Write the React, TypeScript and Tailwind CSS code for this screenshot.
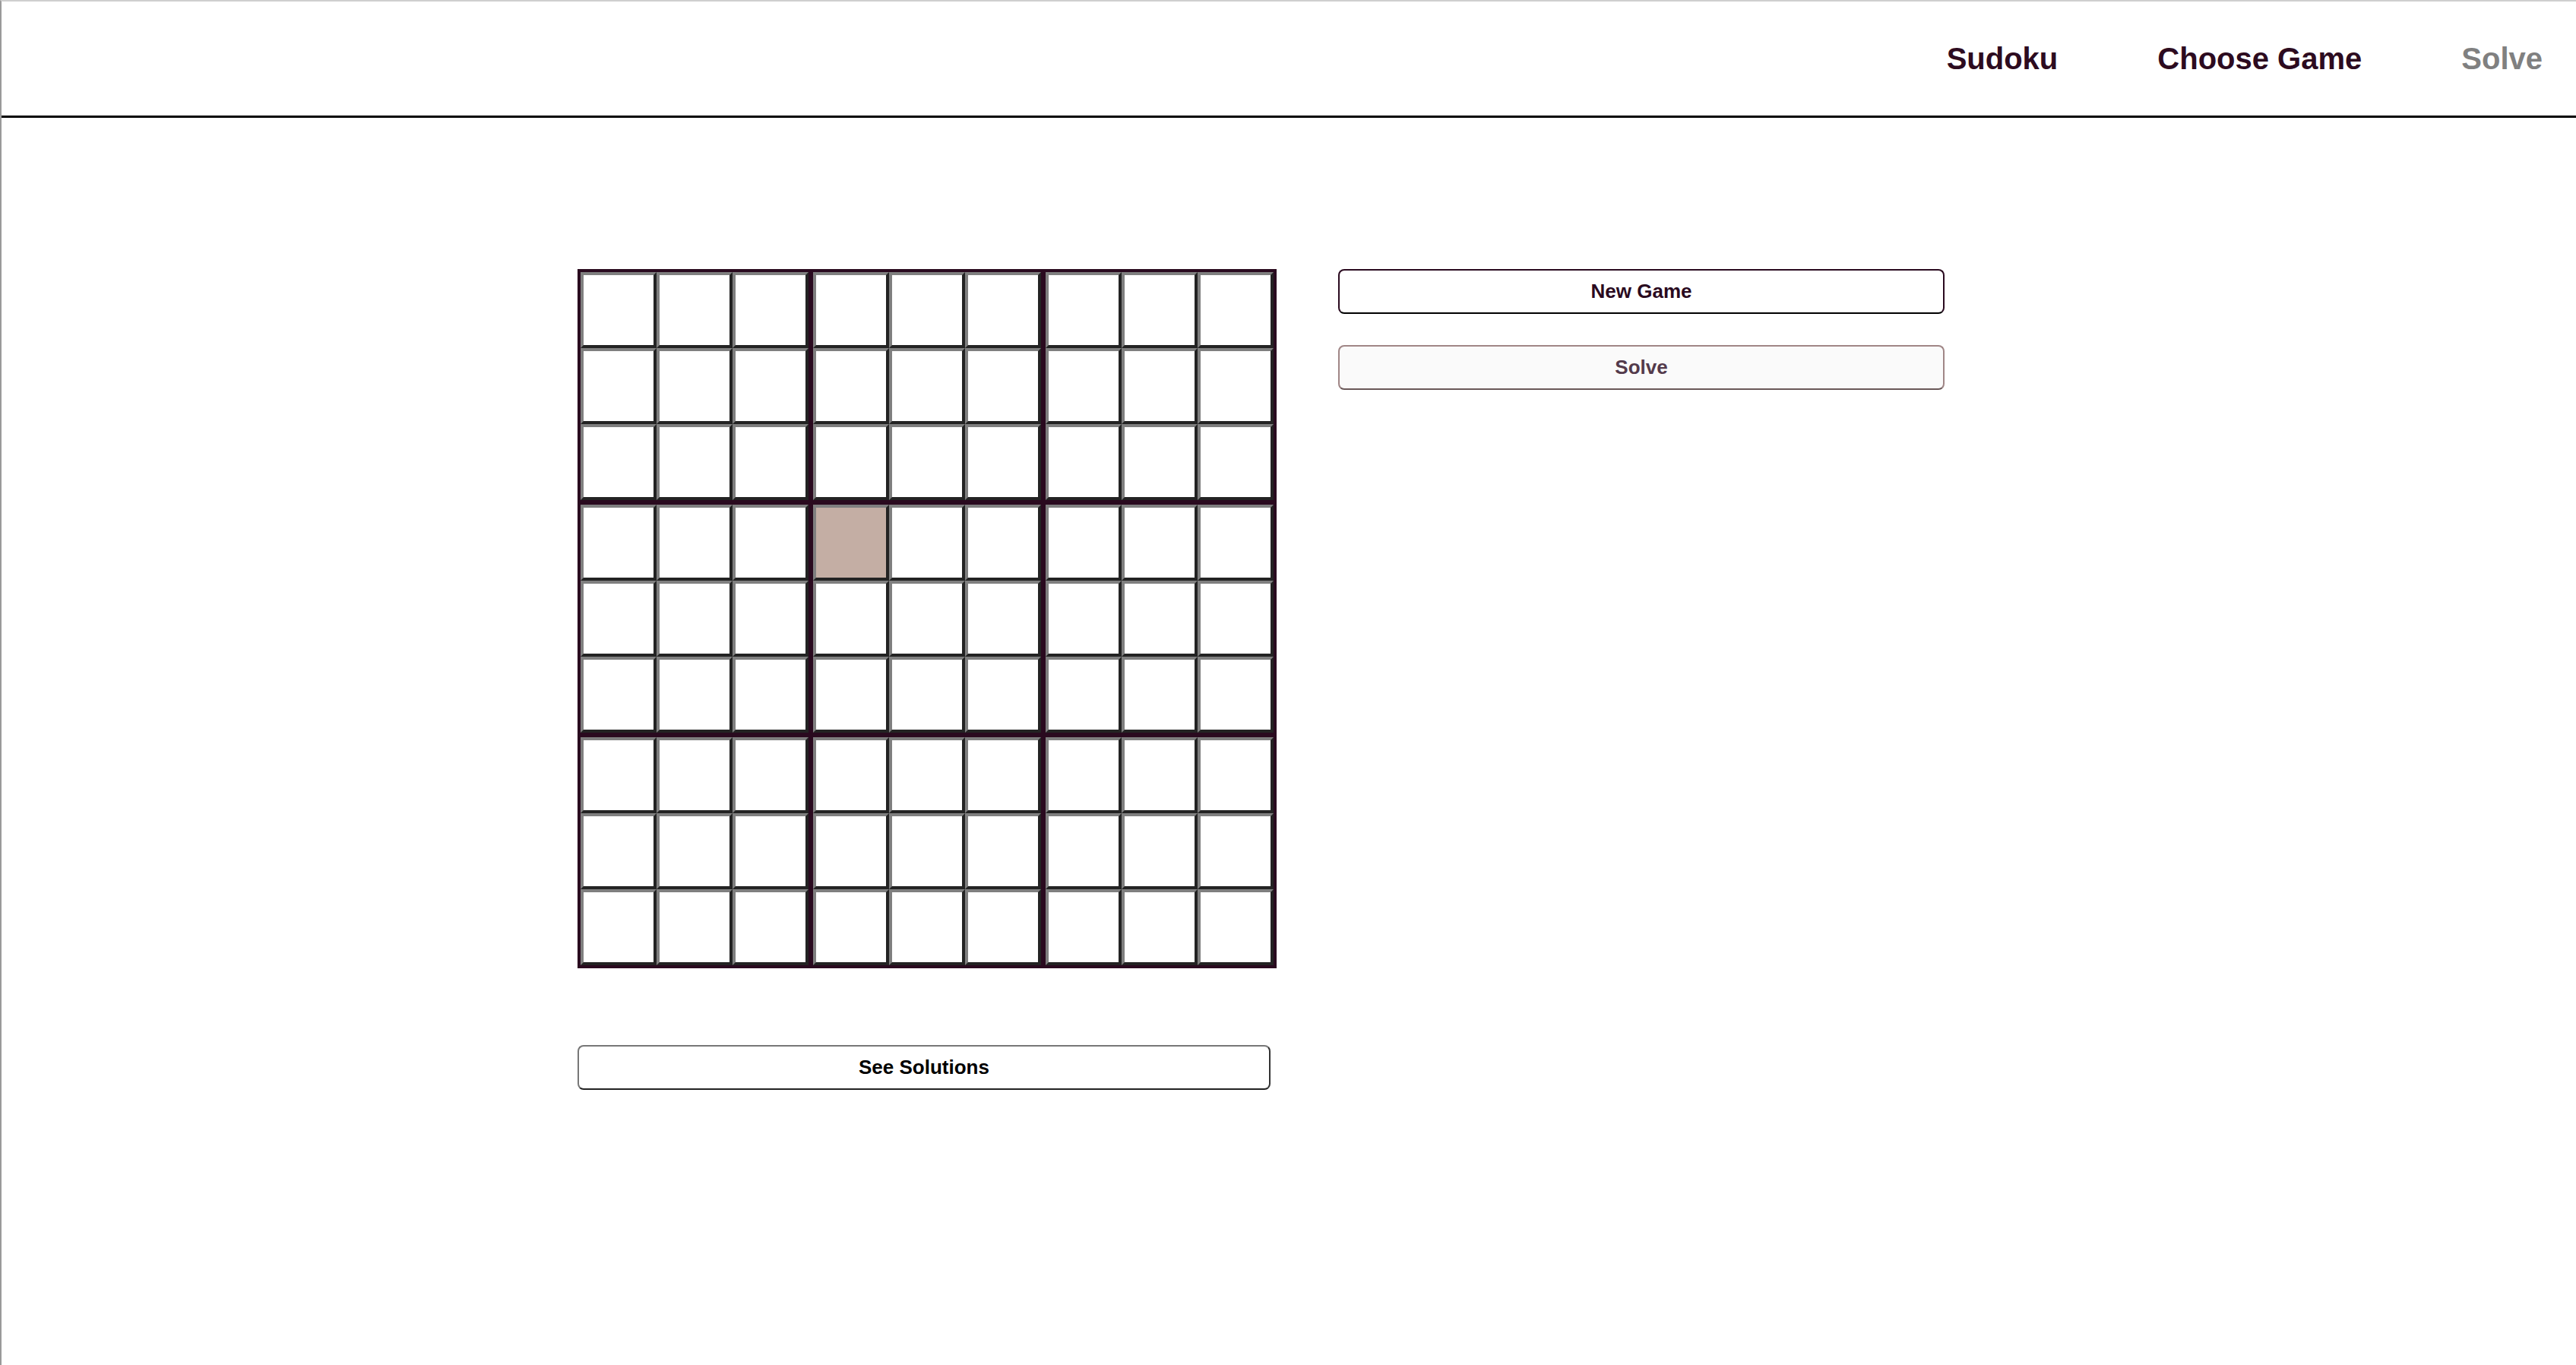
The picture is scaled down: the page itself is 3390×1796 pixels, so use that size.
import { useState } from "react";

// 9x9 sudoku board, split into 3x3 boxes
const BOXES = Array.from({ length: 9 }, (_, i) => i);
const CELLS = Array.from({ length: 9 }, (_, i) => i);

function Cell({ active, onClick }: { active: boolean; onClick: () => void }) {
  return (
    <div
      onClick={onClick}
      className={`h-[100px] w-[100px] border-4 border-t-[#7f7f7f] border-l-[#7f7f7f] border-b-[#232323] border-r-[#232323] ${
        active ? "bg-[#c4aea4]" : "bg-white"
      }`}
    />
  );
}

export default function App() {
  // box 4 (center), cell 0 is selected in the reference
  const [selected, setSelected] = useState<[number, number]>([4, 0]);

  return (
    <div
      className="min-h-screen w-full bg-white border-t-2 border-t-[#cfcfcf] border-l-2 border-l-[#9a9a9a]"
      style={{ fontFamily: '"Liberation Sans", Arial, sans-serif' }}
    >
      {/* header */}
      <header className="h-[153px] flex items-center justify-end gap-[131px] pr-[44px] border-b-[3px] border-black">
        <a href="#" className="text-[40px] font-bold text-[#2d0b20] leading-none">
          Sudoku
        </a>
        <a href="#" className="text-[40px] font-bold text-[#2d0b20] leading-none">
          Choose Game
        </a>
        <a href="#" className="text-[40px] font-bold text-[#808080] leading-none">
          Solve
        </a>
      </header>

      {/* main */}
      <main className="pl-[758px] pt-[199px] flex gap-[81px]">
        <div className="flex flex-col gap-[101px]">
          <div className="grid grid-cols-3 border border-[#2a0a1f] w-[920px]">
            {BOXES.map((b) => (
              <div key={b} className="grid grid-cols-3 border-[3px] border-[#2a0a1f]">
                {CELLS.map((c) => (
                  <Cell
                    key={c}
                    active={selected[0] === b && selected[1] === c}
                    onClick={() => setSelected([b, c])}
                  />
                ))}
              </div>
            ))}
          </div>

          <button className="w-[912px] h-[59px] rounded-[8px] border-2 border-t-[#777777] border-l-[#777777] border-r-[#333333] border-b-[#222222] bg-white text-[26px] font-bold text-black">
            See Solutions
          </button>
        </div>

        <div className="flex flex-col gap-[41px]">
          <button className="w-[798px] h-[59px] rounded-[8px] border-2 border-[#2a0a1f] border-b-black bg-white text-[26px] font-bold text-[#2a0a1f]">
            New Game
          </button>
          <button className="w-[798px] h-[59px] rounded-[8px] border-2 border-[#a08686] border-b-[#6a5858] bg-[#fafafa] text-[26px] font-bold text-[#533a4b]">
            Solve
          </button>
        </div>
      </main>
    </div>
  );
}
